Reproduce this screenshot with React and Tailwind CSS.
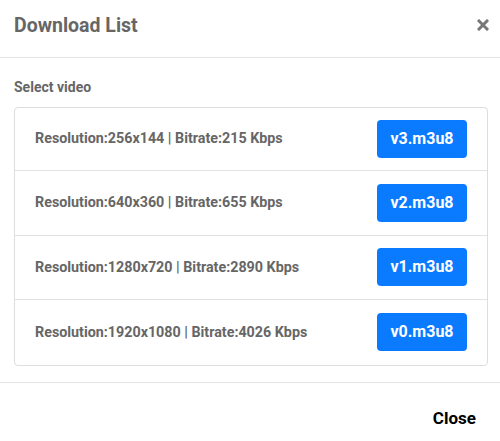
import React from "react";

const rows = [
  { label: "Resolution:256x144 | Bitrate:215 Kbps", file: "v3.m3u8" },
  { label: "Resolution:640x360 | Bitrate:655 Kbps", file: "v2.m3u8" },
  { label: "Resolution:1280x720 | Bitrate:2890 Kbps", file: "v1.m3u8" },
  { label: "Resolution:1920x1080 | Bitrate:4026 Kbps", file: "v0.m3u8" },
];

export default function App() {
  return (
    <div
      className="w-[500px] h-[441px] bg-white overflow-hidden"
      style={{ fontFamily: "Roboto, 'Liberation Sans', sans-serif" }}
    >
      <div className="h-[58px] flex items-center justify-between pl-[14px] pr-[11px] border-b border-[#e5e5e5]">
        <h1 className="text-[19.5px] font-bold text-[#666666] leading-none mt-[-5px]">Download List</h1>
        <svg width="12" height="12" viewBox="0 0 12 12" className="mt-[-7px]">
          <path d="M2 2 L10 10 M10 2 L2 10" stroke="#777" strokeWidth="3" strokeLinecap="square" />
        </svg>
      </div>
      <div className="pl-[14px] pr-[12px] pt-[20px] pb-[16px]">
        <div className="text-[14px] leading-[18px] font-bold text-[#666666] mb-[11px]">Select video</div>
        <div className="border border-[#dddddd] rounded-[4px] divide-y divide-[#e2e2e2]">
          {rows.map((r, i) => (
            <div
              key={r.file}
              className={
                (i === 0 ? "h-[63px] " : "h-[64.5px] ") +
                "flex items-center justify-between pl-[20px] pr-[20px]"
              }
            >
              <span className="text-[14.3px] font-bold text-[#666666]">{r.label}</span>
              <button className="w-[90px] h-[38px] rounded-[4px] bg-[#0a7bff] text-white text-[16px] font-bold">
                {r.file}
              </button>
            </div>
          ))}
        </div>
      </div>
      <div className="border-t border-[#e5e5e5] flex justify-end pr-[24px] pt-[25px]">
        <span className="text-[17px] leading-[20px] font-bold text-black">Close</span>
      </div>
    </div>
  );
}
